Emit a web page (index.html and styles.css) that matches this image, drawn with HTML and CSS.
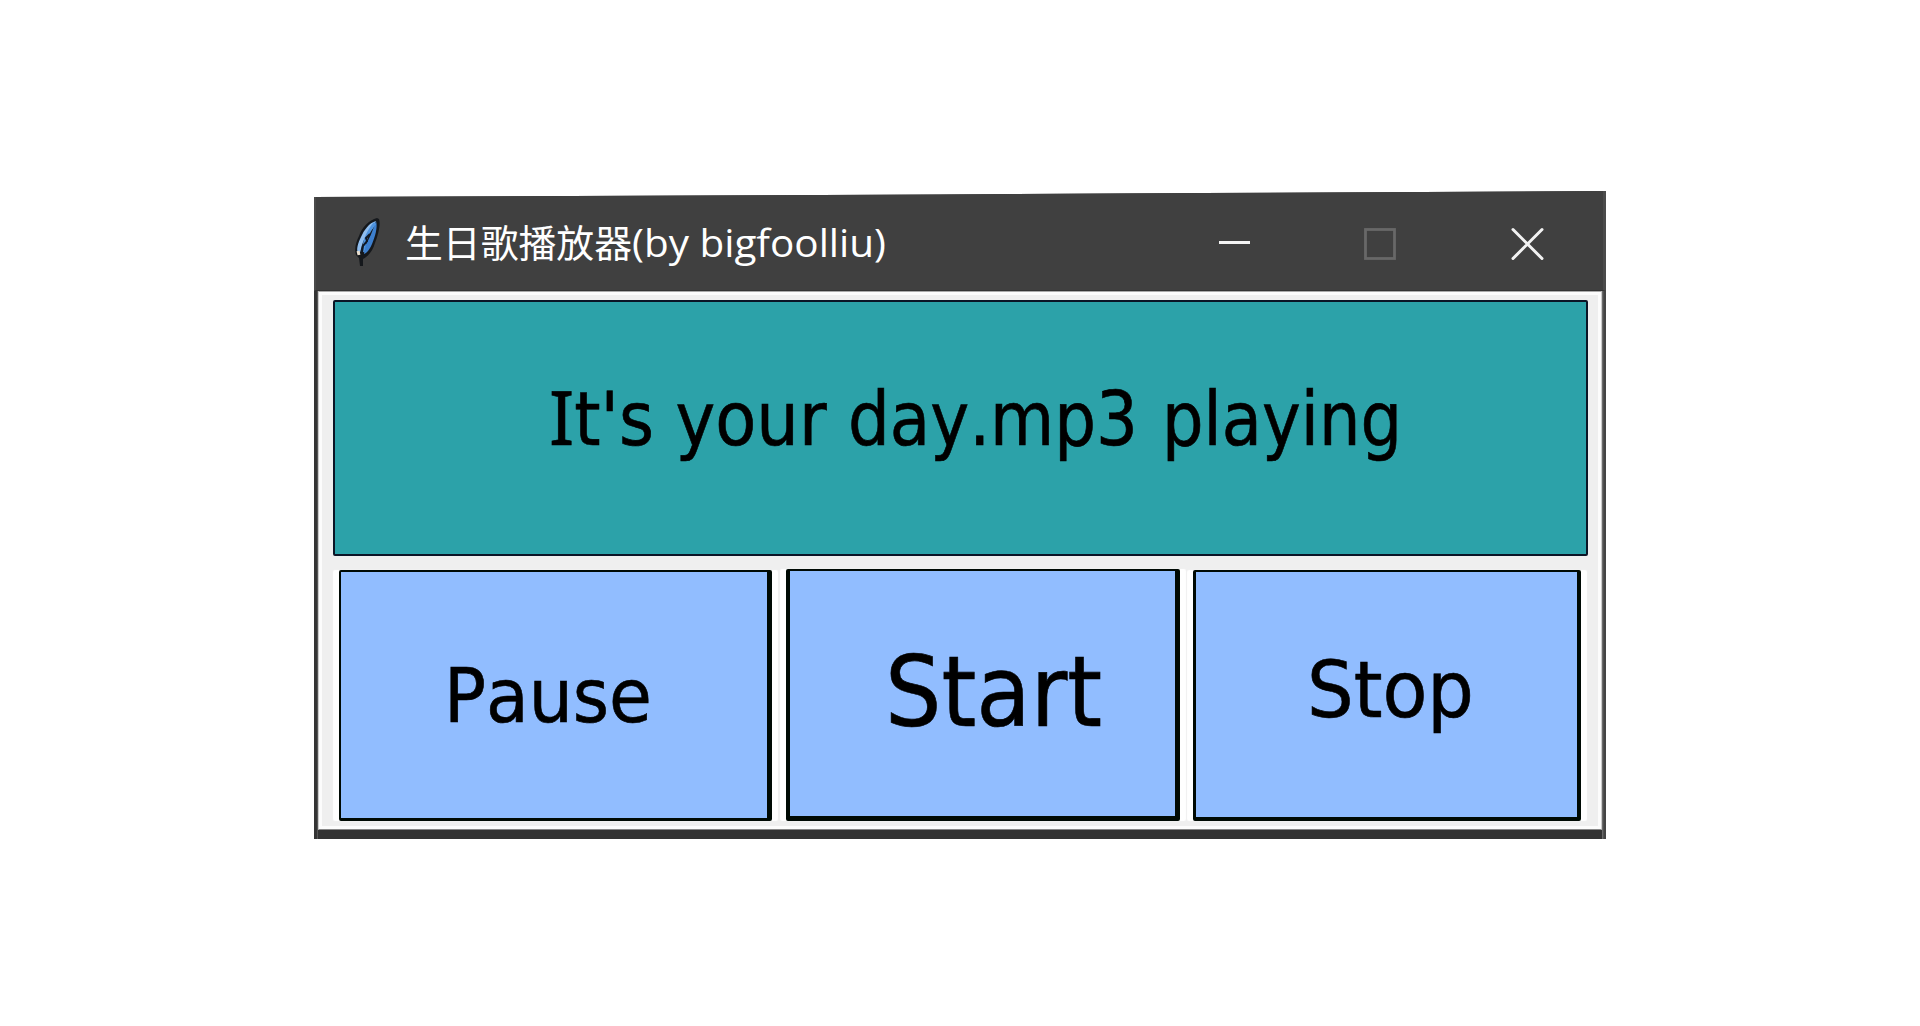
FILE: index.html
```html
<!DOCTYPE html>
<html lang="zh">
<head>
<meta charset="utf-8">
<title>生日歌播放器(by bigfoolliu)</title>
<link rel="stylesheet" href="styles.css">
</head>
<body>
<main class="window">
  <header class="titlebar">
    <svg class="feather" width="30" height="52" viewBox="0 0 30 52">
      <path d="M25 3C17 5 10 12 7 21C4 27 2 34 4 40L7 43L8 51L11 51L11 44C17 41 21 35 23 28C26 21 29 9 27 4Z" fill="#15181c"/>
      <path d="M24 6C17 8 12 15 9 22C6 28 4 34 6 39C8 40 8 37 9 34C11 24 16 18 21 13Z" fill="#8fbdee"/>
      <path d="M24 6C26 12 23 22 20 29C18 34 15 38 12 39L13 31C17 25 21 15 24 6Z" fill="#3d7fce"/>
      <path d="M23 8C18 14 15 20 13 26L11 37" fill="none" stroke="#4f94df" stroke-width="3"/>
      <path d="M18 19L14 23L15 26L11 31L10 37" fill="none" stroke="#101722" stroke-width="2"/>
      <path d="M6 36L7 40" stroke="#e8dccb" stroke-width="3"/>
    </svg>
    <svg class="caption" width="490" height="60" viewBox="0 0 490 60">
      <text x="0" y="41.5" textLength="227" lengthAdjust="spacingAndGlyphs">生日歌播放器</text>
      <text x="227" y="41.5" textLength="254" lengthAdjust="spacingAndGlyphs">(by bigfoolliu)</text>
    </svg>
    <svg class="controls" width="330" height="40" viewBox="0 0 330 40" fill="none">
      <path d="M2 19.5H33" stroke="#f4f4f4" stroke-width="3"/>
      <rect x="148.5" y="6.5" width="29" height="29" stroke="#686868" stroke-width="2.8"/>
      <path d="M296 6.5L325 35.5M325 6.5L296 35.5" stroke="#f2f2f2" stroke-width="3" stroke-linecap="round"/>
    </svg>
  </header>
  <section class="client">
    <div class="display">
      <svg class="label" width="1252" height="252" viewBox="334 302 1252 252" font-size="74">
        <text x="548" y="444.9" textLength="105" lengthAdjust="spacingAndGlyphs"><tspan class="serifed">I</tspan>t's</text>
        <text x="674.5" y="444.9" textLength="151" lengthAdjust="spacingAndGlyphs">your</text>
        <text x="847" y="444.9" textLength="290" lengthAdjust="spacingAndGlyphs">day.mp3</text>
        <text x="1161" y="444.9" textLength="240" lengthAdjust="spacingAndGlyphs">playing</text>
      </svg>
    </div>
    <div class="buttons">
      <button class="btn pause"><svg class="label" width="426" height="246" viewBox="341 571 426 246" font-size="75.5"><text x="444" y="721.3" textLength="208" lengthAdjust="spacingAndGlyphs">Pause</text></svg></button>
      <button class="btn start"><svg class="label" width="385" height="245" viewBox="789 570 385 245" font-size="98.5"><text x="884" y="724.7" textLength="217" lengthAdjust="spacingAndGlyphs">Start</text></svg></button>
      <button class="btn stop"><svg class="label" width="381" height="245" viewBox="1196 571 381 245" font-size="79"><text x="1307" y="716" textLength="167" lengthAdjust="spacingAndGlyphs">Stop</text></svg></button>
    </div>
  </section>
</main>
</body>
</html>
```
FILE: styles.css
```css
* { box-sizing: border-box; }
body {
  margin: 0;
  height: 1026px;
  padding: 191px 314px 0;
  background: #fff;
  overflow: hidden;
}
.window {
  width: 1292px;
  height: 648px;
  padding: 0 4px 9px;
  background: linear-gradient(to right, #343434 3px, #777 4px, transparent 4px, transparent 1288px, #777 1288px, #444 1290px), #333;
  clip-path: polygon(0 6px, 626px 3.5px, 890px 2px, 1292px 0, 1292px 100%, 0 100%);
}
.titlebar {
  height: 100px;
  margin: 0 -4px;
  padding: 24px 56px 0 36px;
  display: flex;
  align-items: flex-start;
  background: #404040;
  border-left: 2px solid #4a4a4a;
  border-right: 3px solid #4b4b4b;
  border-bottom: 1px solid #333;
}
.feather { flex: none; }
.caption {
  margin-left: 23px;
  flex: none;
  fill: #fff;
  font-family: "Open Sans", "Noto Sans CJK SC", sans-serif;
  font-size: 38px;
}
.controls { margin: 8px 0 0 auto; flex: none; }
.client {
  height: 539px;
  padding: 8px 13px 0 14px;
  background: #efefef;
  border: 1px solid #ccc;
  border-top: 1px solid #aaa;
  border-bottom-color: #888;
  box-shadow: inset 0 0 0 3px #fcfcfc;
}
.display {
  height: 256px;
  border: 2px solid #0b1526;
  border-radius: 2px;
  background: #2ca2a9;
}
.buttons {
  display: flex;
  align-items: flex-end;
  height: 265px;
  padding: 0 8px 0 6px;
  gap: 14px;
}
.btn {
  padding: 0;
  border: solid #000a04;
  border-radius: 2px;
  background: #91bdff;
  box-shadow: -6px 0 1px #fff, 6px 0 1px #fff;
}
.pause { width: 433px; height: 251px; border-width: 2px 5px 3px 2px; }
.start { width: 394px; height: 252px; border-width: 2px 5px 5px 4px; }
.stop { width: 388px; height: 251px; border-width: 2px 4px 4px 3px; margin-left: -1px; }
.label {
  display: block;
  font-family: "DejaVu Sans Condensed", "DejaVu Sans", sans-serif;
  font-stretch: condensed;
  font-kerning: none;
  fill: #000;
  stroke: #000;
  stroke-width: 0.6px;
}
.serifed { font-family: "Noto Sans", sans-serif; font-stretch: normal; }
```
